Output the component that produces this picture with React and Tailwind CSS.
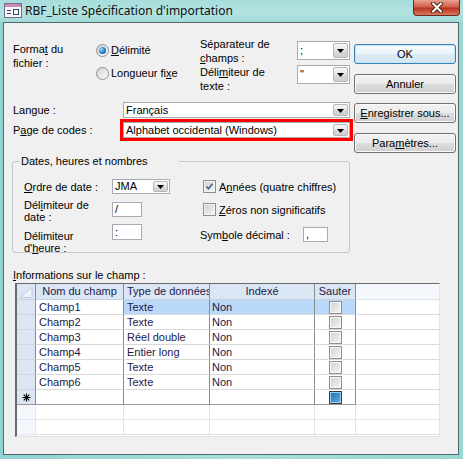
const FONT = "font-['Liberation_Sans',Arial,sans-serif]";

const rows = [
  ["Champ1", "Texte", "Non"],
  ["Champ2", "Texte", "Non"],
  ["Champ3", "Réel double", "Non"],
  ["Champ4", "Entier long", "Non"],
  ["Champ5", "Texte", "Non"],
  ["Champ6", "Texte", "Non"],
];

function Arrow() {
  return (
    <svg width="7" height="4" viewBox="0 0 7 4" className="mt-[1px]">
      <path d="M0 0h7L3.5 4z" fill="#000" />
    </svg>
  );
}

function Combo({ value, className = "" }) {
  return (
    <div className={`flex bg-white border border-[#a7acb4] ${className}`}>
      <div className="flex-1 pl-[2px] flex items-center overflow-hidden whitespace-nowrap leading-none">{value}</div>
      <div className="w-[15px] m-[1px] border border-[#b3b7bd] rounded-[2px] bg-[linear-gradient(#f7f7f7,#e6e6e6_50%,#d9d9d9_51%,#d0d0d0)] flex items-center justify-center">
        <Arrow />
      </div>
    </div>
  );
}

function Input({ value, className = "" }) {
  return (
    <div className={`bg-white border border-[#a7acb4] pl-[2px] flex items-center leading-none ${className}`}>{value}</div>
  );
}

function Btn({ children, def }) {
  return (
    <div
      className={`h-[20px] w-[102px] rounded-[3px] border flex items-center justify-center ${
        def
          ? "border-[#3c7fb1] shadow-[inset_0_0_0_1px_#bfe6fb] bg-[linear-gradient(#f6fbfe,#eaf4fa_50%,#dcebf4_51%,#d3e6f1)]"
          : "border-[#707070] shadow-[inset_0_0_0_1px_#fbfbfb] bg-[linear-gradient(#f2f2f2,#ebebeb_50%,#dddddd_51%,#cfcfcf)]"
      }`}
    >
      {children}
    </div>
  );
}

function Radio({ on }) {
  return (
    <div className="w-[13px] h-[13px] rounded-full border border-[#8e8f8f] bg-[linear-gradient(135deg,#cfd1d4,#fdfdfd)] flex items-center justify-center shrink-0">
      {on && (
        <div className="w-[7px] h-[7px] rounded-full bg-[radial-gradient(circle_at_35%_35%,#9fdcf8,#1f7bc4_55%,#0c3f70)]" />
      )}
    </div>
  );
}

function Check({ on }) {
  return (
    <div className="w-[13px] h-[13px] border border-[#8e8f8f] shadow-[inset_0_0_0_1px_#f4f4f4] bg-[linear-gradient(135deg,#cbcfd5,#f7f7f7)] flex items-center justify-center shrink-0">
      {on && (
        <svg width="9" height="9" viewBox="0 0 9 9">
          <path d="M1.5 4.5l2 2.2 4-5" stroke="#4d6185" strokeWidth="1.6" fill="none" />
        </svg>
      )}
    </div>
  );
}

function GridCheck({ blue }) {
  return (
    <div
      className={`w-[13px] h-[13px] border ${
        blue
          ? "border-[#2c3b4d] shadow-[inset_0_0_0_1px_#9fd0f0] bg-[linear-gradient(135deg,#1c6fb0,#5fb0ea)]"
          : "border-[#8e8e8e] shadow-[inset_0_0_0_1px_#f8f8f8] bg-[linear-gradient(135deg,#d0d0d0,#f6f6f6)]"
      }`}
    />
  );
}

function DataRow({ r, sel }) {
  const hl = sel ? "bg-[#bad9f8]" : "bg-white";
  return (
    <div className="flex h-[15px] shrink-0">
      <div className="w-[19px] border-r border-b border-r-[#8c8c8c] border-b-[#ccd6e4] bg-[#dbe5f3]" />
      <div className="w-[88px] pl-[3px] border-r border-b border-r-[#8c8c8c] border-b-[#d9d9d9] bg-white leading-[14px]">{r[0]}</div>
      <div className={`w-[86px] pl-[3px] border-r border-b border-r-[#8c8c8c] border-b-[#d9d9d9] leading-[14px] ${hl}`}>{r[1]}</div>
      <div className={`w-[105px] pl-[2px] border-r border-b border-r-[#8c8c8c] border-b-[#d9d9d9] leading-[14px] ${hl}`}>{r[2]}</div>
      <div className={`w-[41px] border-r border-b border-r-[#8c8c8c] border-b-[#d9d9d9] flex items-center justify-center ${hl}`}>
        <GridCheck />
      </div>
      <div className="flex-1 border-b border-[#dcdcdc] bg-white" />
    </div>
  );
}

function EmptyRow() {
  return (
    <div className="flex h-[15px] shrink-0">
      <div className="w-[19px] border-r border-b border-[#e2e6ee] bg-[#f4f6fd]" />
      <div className="w-[88px] border-r border-b border-[#e3e3e3]" />
      <div className="w-[86px] border-r border-b border-[#e3e3e3]" />
      <div className="w-[105px] border-r border-b border-[#e3e3e3]" />
      <div className="w-[41px] border-r border-b border-[#e3e3e3]" />
      <div className="flex-1 border-b border-[#e3e3e3]" />
    </div>
  );
}

export default function App() {
  return (
    <div className={`w-[463px] h-[459px] overflow-hidden bg-[linear-gradient(90deg,#8fd3d0,#a9dedc_50%,#97d6d2)] text-black text-[11px] leading-[14px] ${FONT}`}>
      {/* title bar */}
      <div className="h-[22px] flex items-center bg-[linear-gradient(#a7dedd,#b2e3e1_60%,#a3dbd9)]">
        <svg width="18" height="15" viewBox="0 0 18 15" className="ml-[4px] mt-[-1px]">
          <rect x="0.5" y="0.5" width="17" height="14" fill="#f7f7fb" stroke="#6f6f88" />
          <rect x="1" y="1" width="16" height="3" fill="#c98cb8" />
          <path d="M3 7.5h4M3 10.5h4" stroke="#404060" />
          <rect x="9.5" y="6.5" width="5" height="5" fill="none" stroke="#404060" />
        </svg>
        <span className="ml-[3px] text-[12px] font-['Noto_Sans',Arial,sans-serif] text-[#101010]">RBF_Liste Spécification d'importation</span>
        <div className="ml-auto mr-[3px] self-start w-[47px] h-[16px] rounded-b-[4px] border border-t-0 border-[#6b2a20] bg-[linear-gradient(#e7a291,#d0604a_45%,#b8341f_55%,#d87a5e)] flex items-center justify-center">
          <svg width="14" height="11" viewBox="0 0 14 11">
            <path d="M3 1.5l8 8M11 1.5l-8 8" stroke="#5a2418" strokeWidth="4" strokeLinecap="round" />
            <path d="M3 1.5l8 8M11 1.5l-8 8" stroke="#ffffff" strokeWidth="2" strokeLinecap="round" />
          </svg>
        </div>
      </div>

      {/* client area */}
      <div className="ml-[3px] w-[456px] h-[433px] border border-[#50696b] bg-[#f0f0f0]">
        <div className="flex h-[131px]">
          <div className="w-[350px] pt-[14px]">
            <div className="flex h-[56px]">
              <div className="pl-[9px] w-[92px] mt-[5px]">
                <div>Forma<span className="underline">t</span> du</div>
                <div>fichier :</div>
              </div>
              <div className="w-[104px] mt-[6px] flex flex-col gap-[9px]">
                <div className="flex items-center h-[14px] gap-[2px]">
                  <Radio on />
                  <span><span className="underline">D</span>élimité</span>
                </div>
                <div className="flex items-center h-[14px] gap-[2px]">
                  <Radio />
                  <span>Longueur fi<span className="underline">x</span>e</span>
                </div>
              </div>
              <div className="w-[97px]">
                <div>Séparateur de</div>
                <div><span className="underline">c</span>hamps :</div>
                <div>Déli<span className="underline">m</span>iteur de</div>
                <div>texte :</div>
              </div>
              <div className="w-[53px] pt-[4px] flex flex-col gap-[5px]">
                <Combo value=";" className="h-[19px]" />
                <Combo value={'"'} className="h-[19px]" />
              </div>
            </div>

            <div className="flex items-center mt-[9px] h-[16px]">
              <div className="pl-[9px] w-[119px]">Langue :</div>
              <Combo value="Français" className="w-[227px] h-[16px]" />
            </div>
            <div className="flex items-center mt-[4px] h-[16px]">
              <div className="pl-[9px] w-[119px]">P<span className="underline">a</span>ge de codes :</div>
              <Combo
                value="Alphabet occidental (Windows)"
                className="w-[227px] h-[16px] outline-[3px] outline-solid outline-[#ff0000] outline-offset-[0px]"
              />
            </div>
          </div>

          <div className="w-[102px] pt-[21px] flex flex-col">
            <Btn def>OK</Btn>
            <div className="mt-[10px]"><Btn>Annuler</Btn></div>
            <div className="mt-[9px]"><Btn><span><span className="underline">E</span>nregistrer sous...</span></Btn></div>
            <div className="mt-[10px]"><Btn><span>Para<span className="underline">m</span>ètres...</span></Btn></div>
          </div>
        </div>

        {/* dates group */}
        <fieldset className="ml-[8px] w-[338px] h-[99px] border border-[#c4c8cc] rounded-[3px]">
          <legend className="ml-[7px] px-[1px] w-[159px] leading-[14px]">Dates, heures et nombres</legend>
          <div className="flex">
            <div className="w-[187px] pl-[11px]">
              <div className="flex items-center h-[15px] mt-[11px]">
                <div className="w-[88px]"><span className="underline">O</span>rdre de date :</div>
                <Combo value="JMA" className="w-[58px] h-[15px]" />
              </div>
              <div className="flex mt-[5px]">
                <div className="w-[88px] leading-[12px]">
                  <div>Dél<span className="underline">i</span>miteur de</div>
                  <div>date :</div>
                </div>
                <Input value="/" className="w-[30px] h-[15px] mt-[3px]" />
              </div>
              <div className="flex">
                <div className="w-[88px] leading-[12px] pt-[7px]">
                  <div>Délimiteur</div>
                  <div>d'<span className="underline">h</span>eure :</div>
                </div>
                <Input value=":" className="w-[30px] h-[16px] mt-[1px]" />
              </div>
            </div>
            <div className="flex-1">
              <div className="flex items-center h-[15px] mt-[11px] pl-[3px] gap-[3px]">
                <Check on />
                <span>A<span className="underline">n</span>nées (quatre chiffres)</span>
              </div>
              <div className="flex items-center h-[15px] mt-[8px] pl-[3px] gap-[3px]">
                <Check />
                <span><span className="underline">Z</span>éros non significatifs</span>
              </div>
              <div className="flex items-center h-[15px] mt-[10px]">
                <div className="w-[103px]">Sym<span className="underline">b</span>ole décimal :</div>
                <Input value="," className="w-[25px] h-[15px]" />
              </div>
            </div>
          </div>
        </fieldset>

        <div className="pl-[9px] mt-[15px]"><span className="underline">I</span>nformations sur le champ :</div>

        {/* field grid */}
        <div className="ml-[11px] mt-[1px] w-[425px] h-[154px] border-t border-l-2 border-r border-b border-t-[#6a6a6a] border-l-[#6a6a6a] border-r-[#e4e4e4] border-b-[#e4e4e4] bg-white overflow-hidden flex flex-col text-[#1b1b4b]">
          <div className="flex h-[16px] shrink-0">
            <div className="w-[19px] border-r border-b border-r-[#8c8c8c] border-b-[#c6d2e2] bg-[#dbe5f3] flex items-center justify-center">
              <svg width="14" height="12" viewBox="0 0 14 12">
                <path d="M1 11.5L13 1v10.5z" fill="#eef2f8" stroke="#c3cbd6" />
              </svg>
            </div>
            <div className="w-[88px] border-r border-b border-r-[#8c8c8c] border-b-[#c6d2e2] bg-[#dbe6f4] text-center leading-[14px]">Nom du champ</div>
            <div className="w-[86px] pl-[3px] border-r border-b border-r-[#8c8c8c] border-b-[#c6d2e2] bg-[#dbe6f4] leading-[14px] overflow-hidden whitespace-nowrap">Type de données</div>
            <div className="w-[105px] border-r border-b border-r-[#8c8c8c] border-b-[#c6d2e2] bg-[#dbe6f4] text-center leading-[14px]">Indexé</div>
            <div className="w-[41px] border-r border-b border-r-[#8c8c8c] border-b-[#c6d2e2] bg-[#dbe6f4] text-center leading-[14px]">Sauter</div>
            <div className="flex-1 border-b border-[#dde3ee] bg-[#f4f7fc]" />
          </div>

          {rows.map((r, i) => (
            <DataRow key={r[0]} r={r} sel={i === 0} />
          ))}

          <div className="flex h-[15px] shrink-0">
            <div className="w-[19px] border-r border-b border-r-[#8c8c8c] border-b-[#9a9a9a] bg-[#dbe5f3] flex items-center justify-center">
              <svg width="9" height="9" viewBox="0 0 9 9">
                <path d="M4.5 0.5v8M0.5 4.5h8M1.7 1.7l5.6 5.6M7.3 1.7l-5.6 5.6" stroke="#000" strokeWidth="1.1" />
              </svg>
            </div>
            <div className="w-[88px] border-r border-b border-r-[#8c8c8c] border-b-[#9a9a9a]" />
            <div className="w-[86px] border-r border-b border-r-[#8c8c8c] border-b-[#9a9a9a]" />
            <div className="w-[105px] border-r border-b border-r-[#8c8c8c] border-b-[#9a9a9a]" />
            <div className="w-[41px] border-r border-b border-r-[#8c8c8c] border-b-[#9a9a9a] flex items-center justify-center">
              <GridCheck blue />
            </div>
            <div className="flex-1 border-b border-[#dcdcdc]" />
          </div>

          <EmptyRow />
          <EmptyRow />
          <EmptyRow />
        </div>
      </div>
    </div>
  );
}
